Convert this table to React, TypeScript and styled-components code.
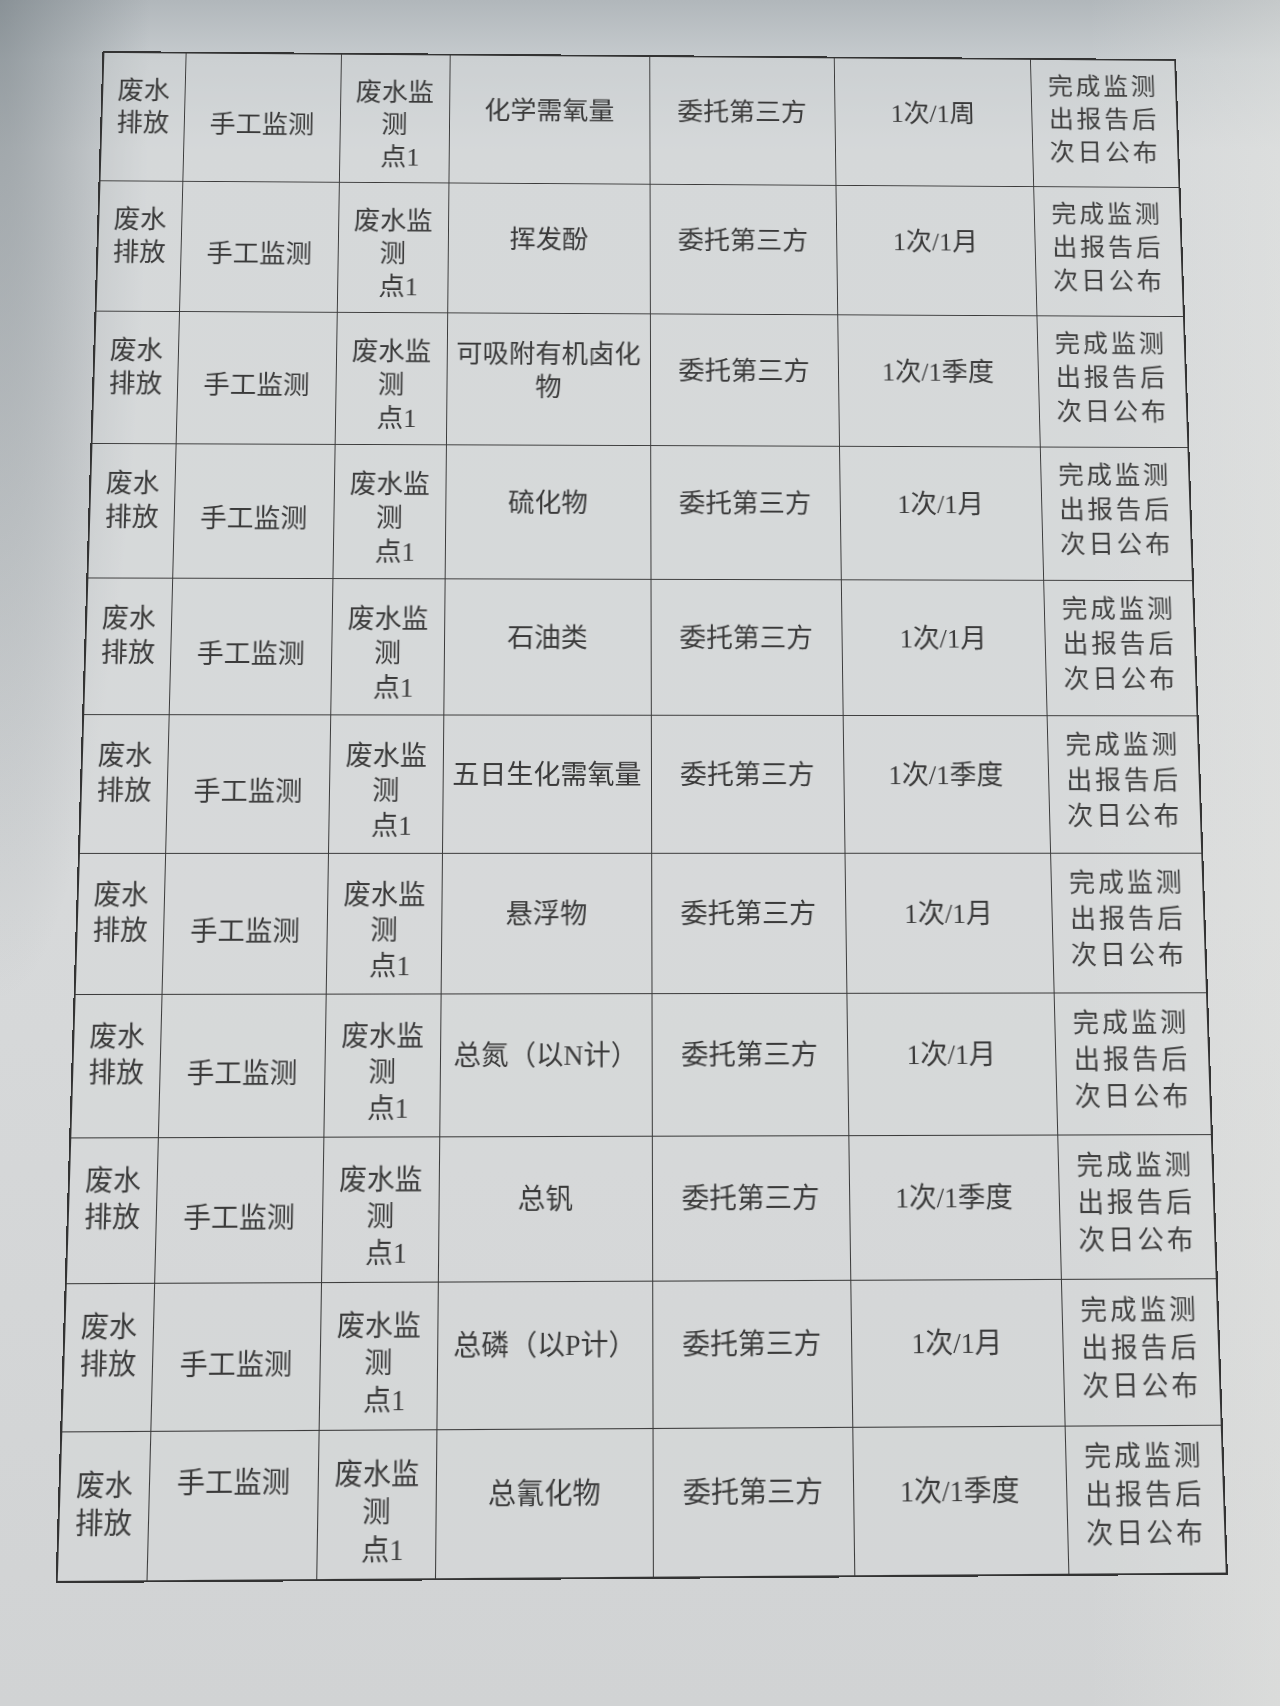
import styled, { createGlobalStyle } from "styled-components";

const GlobalStyle = createGlobalStyle`
  html, body {
    margin: 0;
    padding: 0;
  }
  body {
    background:
      radial-gradient(ellipse 150px 1000px at 0 0, rgba(105, 115, 121, 0.55), rgba(105, 115, 121, 0) 100%),
      linear-gradient(90deg, rgba(0, 0, 0, 0) 85%, rgba(235, 235, 230, 0.35) 100%),
      linear-gradient(180deg, #b1b7bb 0px, #c6cbce 60px, #d4d7d9 150px, #d7d9da 900px, #d1d3d4 1706px);
    font-family: "Liberation Serif", "Noto Sans CJK SC", serif;
    color: #3a3a3a;
  }
`;

type Row = {
  item: string[];
  freq: string;
  lastRow?: boolean;
};

const rows: Row[] = [
  { item: ["化学需氧量"], freq: "1次/1周" },
  { item: ["挥发酚"], freq: "1次/1月" },
  { item: ["可吸附有机卤化", "物"], freq: "1次/1季度" },
  { item: ["硫化物"], freq: "1次/1月" },
  { item: ["石油类"], freq: "1次/1月" },
  { item: ["五日生化需氧量"], freq: "1次/1季度" },
  { item: ["悬浮物"], freq: "1次/1月" },
  { item: ["总氮（以N计）"], freq: "1次/1月" },
  { item: ["总钒"], freq: "1次/1季度" },
  { item: ["总磷（以P计）"], freq: "1次/1月" },
  { item: ["总氰化物"], freq: "1次/1季度", lastRow: true },
];

const colWidths = [85, 161, 113, 208, 193, 206, 153];

const Page = styled.div`
  width: 1280px;
  height: 1706px;
  overflow: hidden;
  padding-top: 18px;
  box-sizing: border-box;
`;

// 照片是斜着拍的, 用透视模拟
const Sheet = styled.div`
  width: 1119px;
  margin: 0 auto;
  transform-origin: 50% 50%;
  transform: perspective(2000px) translateX(2px) rotateX(6.6deg) rotateY(1.1deg) rotateZ(-0.1deg);
`;

const Table = styled.table`
  width: 1119px;
  border-collapse: collapse;
  table-layout: fixed;
  border: 2px solid #333;
  background: rgba(214, 217, 218, 0.35);
`;

const Tr = styled.tr`
  height: 139px;
`;

const Td = styled.td<{ $shift?: number }>`
  border: 1.5px solid #3b3b3b;
  text-align: center;
  vertical-align: middle;
  padding: 0 4px;
  padding-top: ${({ $shift }) => ($shift && $shift > 0 ? $shift * 2 : 0)}px;
  padding-bottom: ${({ $shift }) => ($shift && $shift < 0 ? -$shift * 2 : 0)}px;
  font-size: 27px;
  line-height: 35px;
  color: #3a3a3a;
  white-space: nowrap;
`;

const Line = styled.div<{ $nudge?: number }>`
  display: block;
  padding-left: ${({ $nudge }) => $nudge || 0}px;
`;

const ResultCell = styled(Td)`
  font-size: 26px;
  line-height: 36px;
  letter-spacing: 3px;
  color: #404040;
`;

const App = () => {
  return (
    <>
      <GlobalStyle />
      <Page>
        <Sheet>
          <Table>
            <colgroup>
              {colWidths.map((w, i) => (
                <col key={i} style={{ width: w }} />
              ))}
            </colgroup>
            <tbody>
              {rows.map((row, index) => (
                <Tr key={index}>
                  <Td $shift={row.lastRow ? 0 : -10}>
                    <Line>废水</Line>
                    <Line>排放</Line>
                  </Td>
                  <Td $shift={row.lastRow ? -20 : 9}>手工监测</Td>
                  <Td $shift={8}>
                    <Line>废水监</Line>
                    <Line>测</Line>
                    <Line $nudge={12}>点1</Line>
                  </Td>
                  <Td $shift={-8}>
                    {row.item.map((t, i) => (
                      <Line key={i}>{t}</Line>
                    ))}
                  </Td>
                  <Td $shift={-8}>委托第三方</Td>
                  <Td $shift={-8}>{row.freq}</Td>
                  <ResultCell $shift={-3}>
                    <Line>完成监测</Line>
                    <Line>出报告后</Line>
                    <Line>次日公布</Line>
                  </ResultCell>
                </Tr>
              ))}
            </tbody>
          </Table>
        </Sheet>
      </Page>
    </>
  );
};

export default App;
